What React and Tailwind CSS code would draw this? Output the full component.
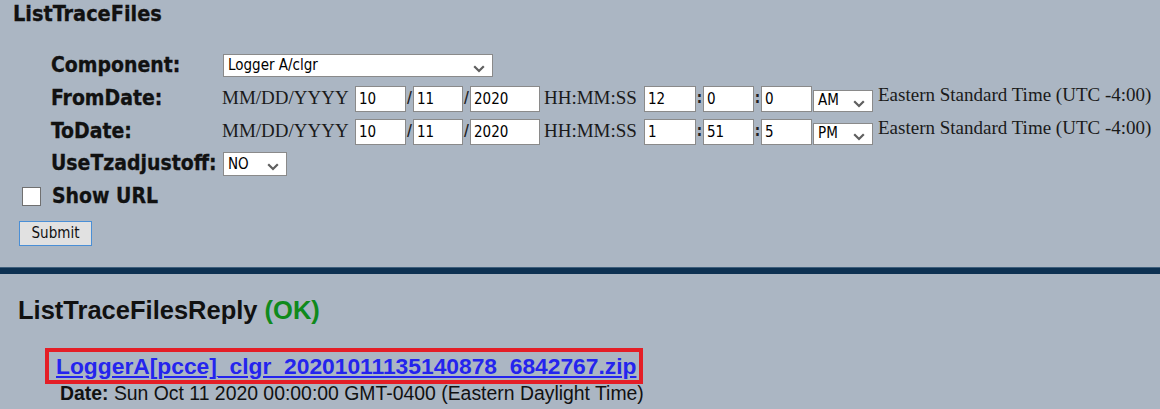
import React from "react";

const tahoma = "[font-family:'DejaVu_Sans_Condensed','DejaVu_Sans',sans-serif] font-stretch-condensed";
const times = "[font-family:'Liberation_Serif',serif]";
const arial = "[font-family:'Liberation_Sans',Arial,sans-serif]";

function Chevron() {
  return (
    <svg width="12" height="8" viewBox="0 0 12 8" className="absolute right-[7px] top-1/2 -translate-y-[1px]">
      <path d="M1.2 1.2 L6 6 L10.8 1.2" fill="none" stroke="#5f5f5f" strokeWidth="2.2" />
    </svg>
  );
}

function Select({ value, className }) {
  return (
    <div className={`relative bg-white border border-[#8a8a8a] flex items-center pl-[4px] text-[15px] text-black ${tahoma} ${className}`}>
      <span>{value}</span>
      <Chevron />
    </div>
  );
}

function Field({ value, width }) {
  return (
    <input
      type="text"
      readOnly
      defaultValue={value}
      className={`h-[26px] ${width} bg-white border border-[#8a8a8a] px-[3px] text-[15px] text-black outline-none ${tahoma}`}
    />
  );
}

function Sep({ children }) {
  return <span className={`w-[7px] text-center text-[15px] font-bold text-[#222] ${tahoma}`}>{children}</span>;
}

function DateRow({ label, date, time, ampm }) {
  return (
    <div className="flex h-[33px] items-center">
      <div className={`w-[172px] text-[21px] font-bold text-[#111] whitespace-nowrap [-webkit-text-stroke:0.3px_#111] ${tahoma}`}>{label}</div>
      <span className={`w-[133px] -ml-[1px] text-[19px] text-[#1a1a1a] ${times}`}>MM/DD/YYYY</span>
      <Field value={date[0]} width="w-[51px]" />
      <Sep>/</Sep>
      <Field value={date[1]} width="w-[50px]" />
      <Sep>/</Sep>
      <Field value={date[2]} width="w-[70px]" />
      <span className={`w-[104px] pl-[4px] text-[19px] text-[#1a1a1a] ${times}`}>HH:MM:SS</span>
      <Field value={time[0]} width="w-[52px]" />
      <Sep>:</Sep>
      <Field value={time[1]} width="w-[51px]" />
      <Sep>:</Sep>
      <Field value={time[2]} width="w-[51px]" />
      <Select value={ampm} className="ml-[1px] mt-[4px] w-[60px] h-[22px]" />
      <span className={`pl-[5px] -mt-[7px] text-[19px] text-[#1a1a1a] whitespace-nowrap ${times}`}>
        Eastern Standard Time (UTC -4:00)
      </span>
    </div>
  );
}

export default function App() {
  return (
    <div className="min-h-screen w-full bg-[#abb6c3] text-black overflow-hidden">
      <div className={`h-[29px] pl-[13px] text-[21.5px] font-bold leading-[27px] text-[#111] [-webkit-text-stroke:0.3px_#111] ${tahoma}`}>
        ListTraceFiles
      </div>

      <div className="mt-[20px] pl-[51px]">
        <div className="flex h-[33px] items-center">
          <div className={`w-[172px] text-[21px] font-bold text-[#111] [-webkit-text-stroke:0.3px_#111] ${tahoma}`}>Component:</div>
          <Select value="Logger A/clgr" className="w-[270px] h-[23px]" />
        </div>
        <DateRow label="FromDate:" date={["10", "11", "2020"]} time={["12", "0", "0"]} ampm="AM" />
        <DateRow label="ToDate:" date={["10", "11", "2020"]} time={["1", "51", "5"]} ampm="PM" />
        <div className="flex h-[32px] items-center">
          <div className={`w-[172px] text-[21px] font-bold text-[#111] whitespace-nowrap [-webkit-text-stroke:0.3px_#111] ${tahoma}`}>
            UseTzadjustoff:
          </div>
          <Select value="NO" className="w-[64px] h-[24px]" />
        </div>
      </div>

      <div className="flex h-[33px] items-center pl-[22px]">
        <div className="w-[19px] h-[19px] bg-white border-[1.5px] border-[#707070]" />
        <span className={`ml-[11px] text-[21px] font-bold text-[#111] [-webkit-text-stroke:0.3px_#111] ${tahoma}`}>Show URL</span>
      </div>

      <div className="mt-[7px] pl-[19px]">
        <button
          type="button"
          className={`h-[25px] w-[73px] bg-[#e1e1e1] border border-[#4a8fd6] text-[15px] text-[#111] ${tahoma}`}
        >
          Submit
        </button>
      </div>

      <div className="mt-[21px] h-[7px] bg-[#0d3152] border-t border-[#3f5f7c]" />

      <div className={`mt-[22px] h-[28px] pl-[18px] text-[25.5px] font-bold leading-[28px] text-[#111] ${arial}`}>
        ListTraceFilesReply <span className="text-[#0f8a1c]">(OK)</span>
      </div>

      <div className="mt-[24px] pl-[45px]">
        <div className="inline-block border-[4px] border-[#e41e26] pl-[7px] pr-[3px]">
          <a
            href="#"
            className={`block h-[28px] text-[22.8px] font-bold leading-[28px] text-[#2424ee] underline ${arial}`}
          >
            LoggerA[pcce]_clgr_20201011135140878_6842767.zip
          </a>
        </div>
      </div>
      <div className={`pl-[60px] text-[19.4px] leading-[19px] text-[#111] whitespace-nowrap ${arial}`}>
        <span className="font-bold">Date:</span> Sun Oct 11 2020 00:00:00 GMT-0400 (Eastern Daylight Time)
      </div>
    </div>
  );
}
